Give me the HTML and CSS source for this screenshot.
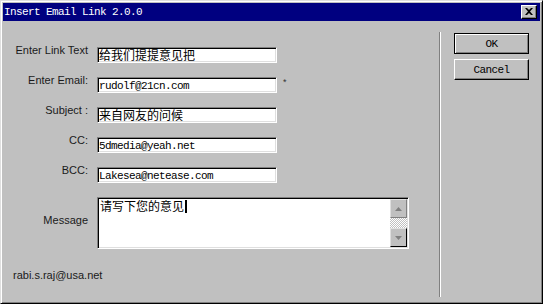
FILE: index.html
```html
<!DOCTYPE html>
<html>
<head>
<meta charset="utf-8">
<link rel="stylesheet" href="styles.css">
</head>
<body>
<div class="window">
  <div class="titlebar">
    <span class="title">Insert Email Link 2.0.0</span>
    <span class="close"><svg width="8" height="7" viewBox="0 0 8 7"><path d="M0 0h2l2 2 2-2h2L5 3.5 8 7H6L4 5 2 7H0l3-3.5z" fill="#000"/></svg></span>
  </div>
  <div class="content">
    <div class="form">
      <div class="grid">
        <label class="lbl">Enter Link Text</label>
        <div class="field cjk">给我们提提意见把</div>
        <span></span>

        <label class="lbl">Enter Email:</label>
        <div class="field mono">rudolf@21cn.com</div>
        <span class="req">*</span>

        <label class="lbl">Subject :</label>
        <div class="field cjk">来自网友的问候</div>
        <span></span>

        <label class="lbl">CC:</label>
        <div class="field mono">5dmedia@yeah.net</div>
        <span></span>

        <label class="lbl">BCC:</label>
        <div class="field mono">Lakesea@netease.com</div>
        <span></span>

        <label class="lbl lbl-msg">Message</label>
        <div class="textarea">
          <div class="ta-text cjk">请写下您的意见<span class="caret"></span></div>
          <div class="scroll">
            <div class="sbtn"><svg width="7" height="4" viewBox="0 0 7 4"><path d="M3.5 0L7 4H0z" fill="#808080"/></svg></div>
            <div class="track"></div>
            <div class="sbtn sbtn-down"><svg width="7" height="4" viewBox="0 0 7 4"><path d="M0 0h7L3.5 4z" fill="#808080"/></svg></div>
          </div>
        </div>
      </div>
      <div class="author">rabi.s.raj@usa.net</div>
    </div>
    <div class="sep"></div>
    <div class="buttons">
      <button class="btn btn-default">OK</button>
      <button class="btn">Cancel</button>
    </div>
  </div>
</div>
</body>
</html>
```

FILE: styles.css
```css
* { box-sizing: border-box; }
html, body { margin: 0; padding: 0; }
body { width: 543px; height: 304px; background: #c0c0c0; overflow: hidden; }

.window {
  width: 543px;
  height: 304px;
  background: #c0c0c0;
  border: 1px solid;
  border-color: #dfdfdf #000 #000 #dfdfdf;
  box-shadow: inset 1px 1px 0 #fff, inset -1px -1px 0 #808080;
  padding: 2px;
  display: flex;
  flex-direction: column;
}

.titlebar {
  height: 18px;
  background: #000080;
  display: flex;
  align-items: center;
  justify-content: space-between;
  padding: 0 3px 0 1px;
}
.title {
  color: #fff;
  font-family: "Liberation Mono", monospace;
  font-size: 11px;
  letter-spacing: -0.6px;
  line-height: 12px;
}
.close {
  width: 16px;
  height: 14px;
  background: #c0c0c0;
  border: 1px solid;
  border-color: #fff #000 #000 #fff;
  box-shadow: inset -1px -1px 0 #808080;
  display: flex;
  align-items: center;
  justify-content: center;
  padding-bottom: 1px;
}

.content {
  flex: 1;
  display: flex;
}

.form {
  width: 436px;
  padding: 26px 0 0 10px;
}

.grid {
  display: grid;
  grid-template-columns: 75px 180px auto;
  column-gap: 9px;
  row-gap: 14px;
  align-items: start;
}

.lbl {
  font-family: "Liberation Sans", Arial, sans-serif;
  font-size: 11px;
  line-height: 13px;
  color: #1a1a1a;
  text-align: right;
  white-space: nowrap;
  margin-top: -3px;
}
.lbl-msg { align-self: center; margin-top: -6px; }

.field {
  height: 16px;
  background: #fff;
  border: 1px solid;
  border-color: #808080 #fff #fff #808080;
  box-shadow: inset 1px 1px 0 #000, inset -1px -1px 0 #dfdfdf;
  padding: 0 2px 0 1px;
  color: #000;
  white-space: nowrap;
  overflow: hidden;
}
.mono {
  font-family: "Liberation Mono", monospace;
  font-size: 11px;
  letter-spacing: -0.6px;
  line-height: 15px;
  padding-top: 1px;
}
.cjk {
  font-family: "Noto Sans CJK SC", sans-serif;
  font-size: 12px;
  line-height: 14px;
}

.req {
  font-family: "Liberation Sans", Arial, sans-serif;
  font-size: 9px;
  line-height: 10px;
  color: #333;
  margin-left: -3px;
}

.textarea {
  grid-column: 2 / 4;
  width: 312px;
  height: 52px;
  background: #fff;
  border: 1px solid;
  border-color: #808080 #fff #fff #808080;
  box-shadow: inset 1px 1px 0 #000, inset -1px -1px 0 #dfdfdf;
  display: flex;
  padding: 1px 1px 1px 1px;
}
.ta-text {
  flex: 1;
  padding: 0 0 0 1px;
  color: #000;
}
.caret {
  display: inline-block;
  width: 2px;
  height: 13px;
  background: #000;
  vertical-align: -2px;
  margin-left: 1px;
}

.scroll {
  width: 17px;
  display: flex;
  flex-direction: column;
}
.sbtn {
  height: 19px;
  background: #c0c0c0;
  border: 1px solid;
  border-color: #dfdfdf #808080 #808080 #dfdfdf;
  display: flex;
  align-items: center;
  justify-content: center;
}
.sbtn-down {
  border-color: #dfdfdf #000 #000 #dfdfdf;
}
.track {
  flex: 1;
  background: repeating-conic-gradient(#c0c0c0 0 25%, #fff 0 50%) 0 0 / 2px 2px;
}

.author {
  margin: 20px 0 0 0;
  font-family: "Liberation Sans", Arial, sans-serif;
  font-size: 11px;
  line-height: 13px;
  color: #1a1a1a;
}

.sep {
  width: 2px;
  margin: 11px 0 4px 0;
  border-left: 1px solid #808080;
  border-right: 1px solid #fff;
}

.buttons {
  padding: 12px 0 0 13px;
  display: flex;
  flex-direction: column;
  gap: 5px;
}
.btn {
  width: 75px;
  height: 21px;
  background: #c0c0c0;
  border: 1px solid;
  border-color: #fff #000 #000 #fff;
  box-shadow: inset -1px -1px 0 #808080;
  font-family: "Liberation Mono", monospace;
  font-size: 11px;
  letter-spacing: -0.6px;
  line-height: 12px;
  color: #000;
  padding: 0;
  margin: 0;
}
.btn-default {
  border: 1px solid #000;
  box-shadow: inset 1px 1px 0 #fff, inset -1px -1px 0 #808080;
}
```
